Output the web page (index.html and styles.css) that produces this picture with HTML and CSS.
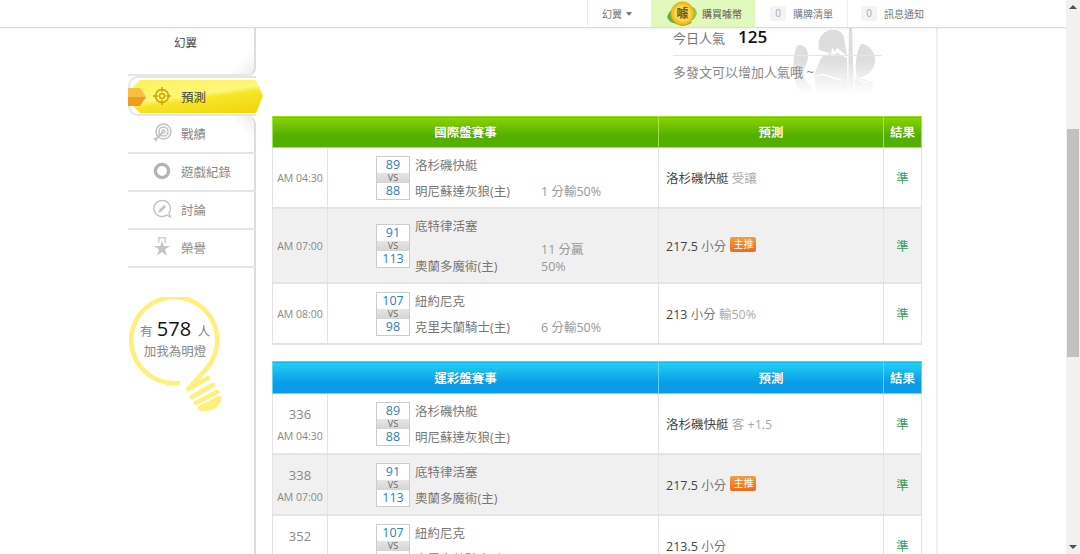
FILE: index.html
```html
<!DOCTYPE html>
<html>
<head>
    <meta charset="utf-8">
    <title>幻翼 預測</title>
    <link rel="stylesheet" href="styles.css">
</head>
<body>
    <div class="viewport">
        <div class="topbar">
            <a class="nav-item nav-user">幻翼 <span class="caret"></span></a>
            <a class="nav-item nav-buy">
                <svg class="coin" width="30" height="26" viewBox="0 0 30 26">
                    <path d="M0 16 C2 10 4 9 6 9 L8 22 C4 22 2 20 0 16Z" fill="#6fae3a"/>
                    <path d="M30 12 C29 8 27 6 25 6 L24 20 C27 19 29 16 30 12Z" fill="#8cc850"/>
                    <path d="M6 21 C12 26 20 26 25 21 L15 18Z" fill="#5fa53a"/>
                    <circle cx="15.500" cy="12.500" r="11.500" fill="#f2c21e" stroke="#e6a814" stroke-width="1"/>
                    <circle cx="15.500" cy="12.500" r="8.500" fill="#f6d65c"/>
                    <text x="15.500" y="17" text-anchor="middle" class="coin-text">噱</text>
                </svg>
                購買噱幣
            </a>
            <a class="nav-item"><span class="count">0</span>購牌清單</a>
            <a class="nav-item"><span class="count">0</span>訊息通知</a>
        </div>

        <div class="wrap">
            <div class="sidebar">
                <div class="side-user">幻翼</div>
                <div class="side-tab">
                    <div class="tab-pill">
                        <svg class="side-icon" width="20" height="20" viewBox="0 0 20 20" fill="none" stroke="#c9a800" stroke-width="1.5">
                            <circle cx="10" cy="10" r="6.5"/>
                            <circle cx="10" cy="10" r="2.5"/>
                            <path d="M10 1v5M10 14v5M1 10h5M14 10h5"/>
                        </svg>
                        <span class="tab-label">預測</span>
                    </div>
                    <span class="tab-tag"></span>
                </div>
                <ul class="side-list">
                    <li class="side-first">
                        <svg class="side-icon" width="20" height="20" viewBox="0 0 20 20" fill="none" stroke="#c4c4c4" stroke-width="1.6">
                            <circle cx="11.5" cy="8.5" r="7.5"/>
                            <circle cx="11.5" cy="8.5" r="4.5"/>
                            <circle cx="11.5" cy="8.5" r="1.5"/>
                            <path d="M11 9 L3 17" stroke-width="2"/>
                            <path d="M1 15h4v4z" fill="#c4c4c4" stroke="none"/>
                        </svg>
                        戰績
                    </li>
                    <li>
                        <svg class="side-icon" width="20" height="20" viewBox="0 0 20 20" fill="none" stroke="#b4b4b4" stroke-width="3.4">
                            <circle cx="10" cy="10" r="6.6"/>
                        </svg>
                        遊戲紀錄
                    </li>
                    <li>
                        <svg class="side-icon" width="20" height="20" viewBox="0 0 20 20" fill="none" stroke="#c4c4c4" stroke-width="1.4">
                            <path d="M10 1.5a8 8 0 1 0 4.5 14.6 L18.5 18 L17 14 A8 8 0 0 0 10 1.5Z"/>
                            <path d="M6.5 13.5 L7 11 L12 6 L14 8 L9 13Z" fill="#c4c4c4" stroke="none"/>
                        </svg>
                        討論
                    </li>
                    <li>
                        <svg class="side-icon" width="20" height="20" viewBox="0 0 20 20">
                            <path d="M6 0h8v6h-1.5V1.5h-5V6H6z" fill="#cfcfcf"/>
                            <path d="M10 4l1.8 5H18l-5 3.6 1.9 6L10 15l-4.900 3.600 1.900-6L2 9h6.200z" fill="#c4c4c4"/>
                        </svg>
                        榮譽
                    </li>
                </ul>
                <div class="side-bottom">
                    <div class="bulb">
                        <svg width="94" height="116" viewBox="0 0 94 116" fill="none" stroke="#fff07c" stroke-width="4.500" stroke-linecap="round" stroke-linejoin="round">
                            <path d="M50 86 A43 43 0 1 1 79 71 L62 90"/>
                            <path d="M60 92 L80 81"/>
                            <path d="M64 100 L85 88"/>
                            <path d="M68 106 L89 95"/>
                            <path d="M72 111 L91 101 C91 108 82 114 72 111Z" fill="#fff07c"/>
                        </svg>
                        <div class="bulb-text">
                            <div class="bulb-line">有 <b>578</b> 人</div>
                            <div>加我為明燈</div>
                        </div>
                    </div>
                </div>
            </div>

            <div class="content">
                <div class="stats">
                    <svg class="mark" width="90" height="66" viewBox="0 0 90 66">
                        <defs>
                            <linearGradient id="markFade" gradientUnits="userSpaceOnUse" x1="0" y1="0" x2="0" y2="66">
                                <stop offset="0" stop-color="#dcdcdc"/>
                                <stop offset="0.5" stop-color="#dedede"/>
                                <stop offset="1" stop-color="#ffffff"/>
                            </linearGradient>
                        </defs>
                        <g fill="url(#markFade)">
                            <path d="M56 0 L59 0 L61 66 L55 66Z"/>
                            <path d="M34 3 C42 0 50 3 51 10 L54 28 L44 20 L40 26 L26 22 C24 12 28 6 34 3Z"/>
                            <path d="M30 28 L42 24 L54 30 L55 66 L24 66 C22 56 20 46 24 40 C26 34 28 30 30 28Z"/>
                            <path d="M4 18 C10 14 16 22 15 30 C14 38 8 42 12 50 C14 56 18 58 20 60 L8 66 C0 54 -2 30 4 18Z"/>
                            <path d="M68 16 C76 16 82 24 82 32 C82 42 74 50 64 50 C62 40 62 26 68 16Z"/>
                            <path d="M62 50 C70 52 80 50 80 58 L78 66 L62 66Z"/>
                        </g>
                        <g fill="none" stroke="#fff" stroke-width="1.500" stroke-linecap="round">
                            <path d="M24 48 C32 44 36 50 48 52"/>
                            <path d="M66 52 C72 56 76 54 80 50"/>
                        </g>
                        <path d="M39 20 L44 26 L38 27Z" fill="#fff"/>
                    </svg>
                    <div class="stat-row">今日人氣<b>125</b></div>
                    <div class="stat-hint">多發文可以增加人氣哦 ~</div>
                </div>

                <table class="games green">
                    <colgroup><col class="c-time"><col class="c-match"><col class="c-pick"><col class="c-res"></colgroup>
                    <tr><th colspan="2">國際盤賽事</th><th>預測</th><th>結果</th></tr>
                    <tr>
                        <td class="time">AM 04:30</td>
                        <td>
                            <div class="match">
                                <div class="score"><span>89</span><i>VS</i><span>88</span></div>
                                <div class="teams">
                                    <div class="team">洛杉磯快艇</div>
                                    <div class="team team2">明尼蘇達灰狼(主)</div>
                                    <div class="note">1 分輸50%</div>
                                </div>
                            </div>
                        </td>
                        <td class="pick"><em>洛杉磯快艇</em> <s>受讓</s></td>
                        <td class="res">準</td>
                    </tr>
                    <tr class="alt">
                        <td class="time">AM 07:00</td>
                        <td>
                            <div class="match">
                                <div class="score"><span>91</span><i>VS</i><span>113</span></div>
                                <div class="teams">
                                    <div class="team">底特律活塞</div>
                                    <div class="team team2">奧蘭多魔術(主)</div>
                                    <div class="note">11 分贏 50%</div>
                                </div>
                            </div>
                        </td>
                        <td class="pick"><em>217.5</em> 小分 <span class="tag">主推</span></td>
                        <td class="res">準</td>
                    </tr>
                    <tr>
                        <td class="time">AM 08:00</td>
                        <td>
                            <div class="match">
                                <div class="score"><span>107</span><i>VS</i><span>98</span></div>
                                <div class="teams">
                                    <div class="team">紐約尼克</div>
                                    <div class="team team2">克里夫蘭騎士(主)</div>
                                    <div class="note">6 分輸50%</div>
                                </div>
                            </div>
                        </td>
                        <td class="pick"><em>213</em> 小分 <s>輸50%</s></td>
                        <td class="res">準</td>
                    </tr>
                </table>

                <table class="games blue">
                    <colgroup><col class="c-time"><col class="c-match"><col class="c-pick"><col class="c-res"></colgroup>
                    <tr><th colspan="2">運彩盤賽事</th><th>預測</th><th>結果</th></tr>
                    <tr>
                        <td class="time"><div class="num">336</div>AM 04:30</td>
                        <td>
                            <div class="match">
                                <div class="score"><span>89</span><i>VS</i><span>88</span></div>
                                <div class="teams">
                                    <div class="team">洛杉磯快艇</div>
                                    <div class="team team2">明尼蘇達灰狼(主)</div>
                                </div>
                            </div>
                        </td>
                        <td class="pick"><em>洛杉磯快艇</em> <s>客 +1.5</s></td>
                        <td class="res">準</td>
                    </tr>
                    <tr class="alt">
                        <td class="time"><div class="num">338</div>AM 07:00</td>
                        <td>
                            <div class="match">
                                <div class="score"><span>91</span><i>VS</i><span>113</span></div>
                                <div class="teams">
                                    <div class="team">底特律活塞</div>
                                    <div class="team team2">奧蘭多魔術(主)</div>
                                </div>
                            </div>
                        </td>
                        <td class="pick"><em>217.5</em> 小分 <span class="tag">主推</span></td>
                        <td class="res">準</td>
                    </tr>
                    <tr>
                        <td class="time"><div class="num">352</div>AM 08:00</td>
                        <td>
                            <div class="match">
                                <div class="score"><span>107</span><i>VS</i><span>98</span></div>
                                <div class="teams">
                                    <div class="team">紐約尼克</div>
                                    <div class="team team2">克里夫蘭騎士(主)</div>
                                </div>
                            </div>
                        </td>
                        <td class="pick"><em>213.5</em> 小分</td>
                        <td class="res">準</td>
                    </tr>
                </table>
            </div>
        </div>
    </div>

    <div class="scrollbar">
        <span class="arrow-up"></span>
        <span class="thumb"></span>
        <span class="arrow-down"></span>
    </div>
</body>
</html>
```

FILE: styles.css
```css
html, body {
    margin: 0;
    height: 554px;
    overflow: hidden;
}
body {
    display: flex;
    font-family: "Open Sans", "Noto Sans CJK TC", sans-serif;
    background-color: white;
    color: #777;
}
.viewport {
    flex: 1;
    min-width: 0;
    height: 554px;
    overflow: hidden;
}

/* top bar */
.topbar {
    position: relative;
    z-index: 2;
    display: flex;
    justify-content: flex-end;
    height: 27px;
    padding-right: 129px;
    background-color: white;
    border-bottom: 1px solid #ddd;
    box-shadow: 0 1px 2px rgba(0,0,0,0.06);
}
.nav-item {
    display: flex;
    align-items: center;
    box-sizing: border-box;
    height: 27px;
    padding-left: 13px;
    border-left: 1px solid #eee;
    font-size: 10px;
    color: #777;
}
.nav-user {
    width: 64px;
    padding-left: 14px;
}
.nav-buy {
    width: 104px;
    padding-left: 16px;
    border-left: none;
    background-color: #e2f9bd;
    color: #555;
}
.nav-item:nth-child(3) {
    width: 92px;
    padding-left: 15px;
    border-left: none;
}
.nav-item:nth-child(4) {
    width: 90px;
}
.caret {
    width: 0;
    height: 0;
    margin-left: 4px;
    border-left: 3px solid transparent;
    border-right: 3px solid transparent;
    border-top: 4px solid #777;
}
.coin {
    margin-right: 5px;
}
.coin-text {
    font-size: 12px;
    font-weight: 700;
    fill: #7a5a10;
}
.count {
    width: 16px;
    height: 15px;
    margin-right: 7px;
    border-radius: 3px;
    background-color: #f3f3f3;
    text-align: center;
    line-height: 15px;
    color: #aaa;
}

/* page columns */
.wrap {
    display: flex;
    box-sizing: border-box;
    width: 810px;
    height: 527px;
    margin-left: 128px;
    border-right: 2px solid #eee;
}

/* sidebar */
.sidebar {
    display: flex;
    flex-direction: column;
    flex: none;
    width: 128px;
}
.side-user {
    box-sizing: border-box;
    height: 48px;
    padding: 6px 0 0 46px;
    border-right: 2px solid #ddd;
    border-bottom: 2px solid #e6e6e6;
    border-bottom-right-radius: 8px;
    background: linear-gradient(135deg, white 50%, #ececec 100%) no-repeat right bottom / 30px 22px;
    font-size: 11.5px;
    line-height: 18px;
    color: #444;
}
.side-tab {
    position: relative;
    box-sizing: border-box;
    height: 40px;
    padding: 2px 0 1px 4px;
    border: 2px solid #e6e6e6;
    border-right: none;
    border-radius: 10px 0 0 10px;
}
.tab-pill {
    display: flex;
    align-items: center;
    box-sizing: border-box;
    width: 129px;
    height: 33px;
    padding: 0 0 1px 18px;
    background: linear-gradient(172deg, #fff05a 0%, #fff77a 45%, #f7e52a 55%, #efd50a 100%);
    clip-path: polygon(6px 0, 122px 0, 129px 16px, 122px 33px, 6px 33px, 0 27px, 0 6px);
}
.tab-tag {
    position: absolute;
    left: -2px;
    top: 10px;
    width: 18px;
    height: 18px;
    background: linear-gradient(#f8c040 50%, #f39a1e 50%);
    clip-path: polygon(0 0, 12px 0, 18px 9px, 12px 18px, 0 18px);
}
.tab-label {
    font-size: 12.5px;
    color: #444;
}
.side-list {
    margin: 0;
    padding: 0;
    list-style: none;
}
.side-list li {
    display: flex;
    align-items: center;
    box-sizing: border-box;
    height: 38px;
    padding: 0 0 2px 24px;
    border-right: 2px solid #ddd;
    border-bottom: 2px solid #e6e6e6;
    font-size: 12.5px;
    color: #888;
}
.side-list .side-first {
    border-top-right-radius: 8px;
    background: linear-gradient(45deg, white 50%, #ececec 100%) no-repeat right top / 30px 22px;
}
.side-icon {
    flex: none;
    margin-right: 9px;
}
.side-bottom {
    flex: 1;
    padding-top: 29px;
    border-right: 2px solid #ddd;
}
.bulb {
    position: relative;
    width: 94px;
    height: 116px;
}
.bulb svg {
    display: block;
}
.bulb-text {
    position: absolute;
    left: 2px;
    top: 22px;
    width: 90px;
    text-align: center;
    font-size: 12.5px;
    line-height: 20px;
    color: #888;
}
.bulb-line b {
    margin: 0 3px 0 1px;
    font-size: 20px;
    font-weight: 400;
    color: #111;
}

/* main column */
.content {
    flex: 1;
    min-width: 0;
    padding-left: 16px;
}
.stats {
    position: relative;
    box-sizing: border-box;
    width: 209px;
    height: 88px;
    margin-left: 401px;
}
.mark {
    position: absolute;
    left: 120px;
    top: 0;
}
.stat-row {
    position: relative;
    height: 27px;
    border-bottom: 1px solid #e6e6e6;
    font-size: 13px;
    line-height: 17px;
}
.stat-row b {
    margin-left: 13px;
    font-size: 17px;
    font-weight: 600;
    color: #111;
}
.stat-hint {
    position: relative;
    padding-top: 7px;
    font-size: 13px;
    line-height: 18px;
    color: #888;
}

/* tables */
.games {
    table-layout: fixed;
    width: 649px;
    margin-bottom: 16px;
    border-collapse: collapse;
    font-size: 12.5px;
}
.c-time { width: 55px; }
.c-match { width: 331px; }
.c-pick { width: 225px; }
.c-res { width: 38px; }
.games th {
    height: 29px;
    padding: 0 0 1px;
    border: 1px solid #a6e24a;
    border-top: 1px solid #9edf1a;
    font-size: 12.5px;
    font-weight: 700;
    color: white;
    text-shadow: 0 0 1px rgba(0,0,0,0.25);
    background: linear-gradient(#8ad400, #54b000 60%);
}
.blue th {
    height: 30px;
    border-color: #5fd5f4;
    background: linear-gradient(#20d2f3, #0a9ce8 65%);
}
.games td {
    height: 49px;
    padding: 5px 0;
    border: 1px solid #e4e4e4;
    border-width: 1px 1px 2px 1px;
}
.alt td {
    background-color: #f0f0f0;
}
.time {
    text-align: center;
    font-size: 10.5px;
    color: #888;
}
.num {
    margin-bottom: 6px;
    font-size: 13px;
}
.match {
    display: flex;
    align-items: center;
    padding-left: 48px;
}
.score {
    flex: none;
    box-sizing: border-box;
    width: 34px;
    margin-right: 5px;
    border: 1px solid #ccc;
    background-color: white;
    text-align: center;
    color: #2f7fb5;
}
.score span {
    display: block;
    height: 16px;
    font-size: 12.5px;
    line-height: 16px;
}
.score i {
    display: block;
    height: 10px;
    background: linear-gradient(#e6e6e6, #d4d4d4);
    font-size: 9px;
    font-style: normal;
    line-height: 10px;
    color: #666;
}
.teams {
    display: grid;
    grid-template-columns: 126px 65px;
    row-gap: 6px;
    margin-top: 3px;
}
.team {
    grid-column: 1;
    line-height: 20px;
    color: #777;
}
.team2 {
    grid-row: 2;
    align-self: end;
}
.note {
    grid-column: 2;
    grid-row: 2;
    align-self: end;
    transform: translateY(-2px);
    line-height: 17px;
    color: #999;
}
.pick {
    padding-left: 7px !important;
    color: #777;
}
.pick em {
    font-style: normal;
    color: #444;
}
.pick s {
    text-decoration: none;
    color: #aaa;
}
.tag {
    display: inline-block;
    width: 26px;
    height: 15px;
    margin-left: 1px;
    border-radius: 2px;
    background: linear-gradient(#f99b40, #ee6a1a);
    vertical-align: 3px;
    text-align: center;
    font-size: 10px;
    line-height: 15px;
    color: white;
}
.res {
    text-align: center;
    color: #3a9a5a;
}

/* window scrollbar */
.scrollbar {
    position: relative;
    flex: none;
    width: 14px;
    height: 554px;
    background-color: #f1f1f1;
}
.thumb {
    position: absolute;
    left: 1px;
    top: 129px;
    width: 12px;
    height: 228px;
    background-color: #c1c1c1;
}
.arrow-up, .arrow-down {
    position: absolute;
    left: 3px;
    width: 0;
    height: 0;
    border-left: 4px solid transparent;
    border-right: 4px solid transparent;
}
.arrow-up {
    top: 5px;
    border-bottom: 4px solid #505050;
}
.arrow-down {
    top: 545px;
    border-top: 4px solid #505050;
}
```
